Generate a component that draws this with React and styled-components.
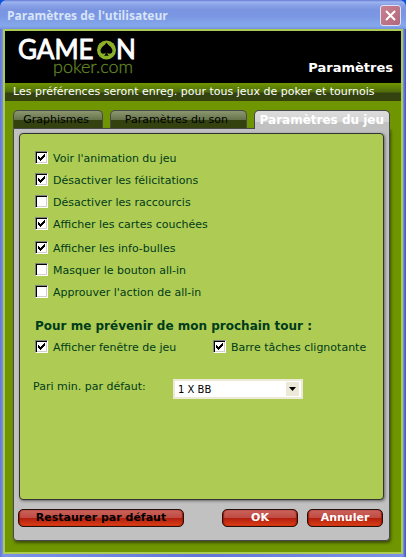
import styled, { createGlobalStyle } from "styled-components";

const GlobalStyle = createGlobalStyle`
  * {
    box-sizing: border-box;
  }

  body {
    margin: 0;
    background: #0a53e0;
    font-family: "DejaVu Sans", sans-serif;
    font-size: 11px;
  }
`;

const Window = styled.div`
  display: flex;
  flex-direction: column;
  min-height: 100vh;
  padding: 0 3px 3px;
  border-radius: 7px 7px 0 0;
  background: linear-gradient(to right, #6375d6, #7b92e8 3px, #6375d6 50%, #7b92e8 calc(100% - 3px), #3f4fbd);
`;

const TitleBar = styled.header`
  display: flex;
  align-items: center;
  justify-content: space-between;
  height: 29px;
  margin: 0 -3px;
  padding: 2px 5px 0 7px;
  border-radius: 7px 7px 0 0;
  background: linear-gradient(
    #6679d5,
    #9db5f0 2px,
    #8aa2e6 5px,
    #7a94e0 10px,
    #7b97e3 16px,
    #84a8ec 26px,
    #7590df
  );
`;

const Title = styled.h1`
  margin: 0;
  font-family: "Open Sans", sans-serif;
  font-size: 12px;
  font-weight: 700;
  line-height: 20px;
  color: #d8e4f8;
`;

const CloseButton = styled.button`
  display: grid;
  place-items: center;
  width: 21px;
  height: 21px;
  padding: 0;
  border: 1px solid #dfe0f4;
  border-radius: 3px;
  background: linear-gradient(135deg, #c9818f, #b2687c);
`;

const Content = styled.main`
  display: flex;
  flex: 1;
  flex-direction: column;
  border: 2px solid #accb53;
  background: #6f9500;
`;

const Banner = styled.div`
  display: flex;
  align-items: flex-end;
  justify-content: space-between;
  height: 52px;
  padding: 0 8px 6px 13px;
  background: #000;
`;

const Logo = styled.svg`
  width: 120px;
  height: 46px;
  overflow: visible;
  font-family: Lato, sans-serif;
`;

const BannerTitle = styled.h2`
  margin: 0;
  font-size: 13px;
  font-weight: 700;
  line-height: 18px;
  color: #fff;
`;

const Notice = styled.p`
  height: 18px;
  margin: 0;
  padding: 0 8px;
  line-height: 17px;
  white-space: nowrap;
  color: #fff;
  background: linear-gradient(#6f9500, #4e6b0c 9px, #33420f 10px, #33420f);
`;

const Body = styled.div`
  display: flex;
  flex: 1;
  flex-direction: column;
  padding: 9px 11px 11px 8px;
`;

const TabList = styled.div`
  display: grid;
  grid-template-columns: 90fr 136fr 136fr;
  gap: 7px;
`;

const Tab = styled.button`
  height: 18px;
  padding: 0 4px 0 0;
  border: 1px solid #48494a;
  border-bottom: 0;
  border-radius: 5px 5px 0 0;
  font-family: inherit;
  font-size: 11px;
  line-height: 17px;
  white-space: nowrap;
  color: #000;
  background: linear-gradient(#8c9770, #65734a 9px, #33420f 9px, #33420f);

  &[aria-selected="true"] {
    height: 19px;
    margin-bottom: -1px;
    padding: 0;
    z-index: 1;
    font-size: 12px;
    font-weight: 700;
    color: #fff;
    background: linear-gradient(#dcdcdc, #d4d4d4 11px, #c1c1c1 11px);
  }
`;

const Panel = styled.section`
  display: flex;
  flex: 1;
  flex-direction: column;
  padding: 4px 5px 13px;
  border: 1px solid #48494a;
  border-radius: 0 0 4px 4px;
  background: #c1c1c1;
  box-shadow: 1px 2px 3px #3b5000;
`;

const Options = styled.form`
  flex: 1;
  padding: 13px 13px 0;
  border: 1px solid #333;
  border-radius: 4px;
  color: #003c1b;
  background: #aecb53;
  box-shadow: 1px 1px 3px #666;
`;

const OptionGroup = styled.div`
  margin-bottom: 2px;
`;

const Option = styled.label`
  display: flex;
  align-items: flex-start;
  gap: 5px;
  height: 22px;
  padding-left: 2px;
  line-height: 24px;
  white-space: nowrap;
`;

const OptionRow = styled.div`
  display: grid;
  grid-template-columns: 178fr 159fr;
`;

const CheckBox = styled.input`
  appearance: none;
  flex: none;
  width: 13px;
  height: 13px;
  margin: 4px 0 0;
  border: 1px solid;
  border-color: #808080 #fff #fff #808080;
  background: #fff;
  box-shadow: inset 1px 1px #000, inset -1px -1px #d4d0c8;

  &:checked {
    background: #fff
      url("data:image/svg+xml,%3Csvg xmlns='http://www.w3.org/2000/svg' width='11' height='11' shape-rendering='crispEdges'%3E%3Cpath d='M2 4h1v1h1v1h1v-1h1v-1h1v-1h1v-1h1v3h-1v1h-1v1h-1v1h-1v1h-1v-1h-1v-1h-1z'/%3E%3C/svg%3E");
  }
`;

const GroupTitle = styled.h3`
  height: 22px;
  margin: 11px 0 0;
  padding-left: 2px;
  font-size: 12px;
  line-height: 24px;
  white-space: nowrap;
`;

const BetRow = styled.div`
  display: flex;
  align-items: flex-start;
  margin-top: 21px;
`;

const BetLabel = styled.label`
  width: 140px;
  line-height: 16px;
`;

const SelectBox = styled.div`
  display: flex;
  align-items: center;
  width: 130px;
  height: 20px;
  padding-right: 2px;
  border: 2px solid #ece9d8;
  background: #fff;
`;

const Select = styled.select`
  appearance: none;
  flex: 1;
  width: 0;
  height: 16px;
  padding: 0 3px;
  border: 0;
  font-family: inherit;
  font-size: 10px;
  color: #000;
  background: transparent;
`;

const SelectArrow = styled.svg`
  width: 13px;
  height: 14px;
  background: #ece9d8;
`;

const Actions = styled.footer`
  display: flex;
  gap: 9px;
  margin: 9px 0 0 -1px;
  padding-right: 1px;
`;

const ActionButton = styled.button`
  width: ${(props) => (props.$wide ? 166 : 76)}px;
  height: 18px;
  margin-right: ${(props) => (props.$wide ? "auto" : 0)};
  padding: 0;
  border: 1px solid #24120a;
  border-radius: 5px;
  font-family: inherit;
  font-size: 11px;
  font-weight: 700;
  line-height: 16px;
  white-space: nowrap;
  color: ${(props) => (props.$wide ? "#000" : "#fff")};
  background: linear-gradient(#c9645e, #c04a41 8px, #b11d0e 8px, #dc4016);
  box-shadow: inset 1px 0 1px #a51507, inset -1px 0 1px #a51507;
`;

const gameOptions = [
  [
    { label: "Voir l'animation du jeu", checked: true },
    { label: "Désactiver les félicitations", checked: true },
    { label: "Désactiver les raccourcis", checked: false },
    { label: "Afficher les cartes couchées", checked: true },
  ],
  [
    { label: "Afficher les info-bulles", checked: true },
    { label: "Masquer le bouton all-in", checked: false },
    { label: "Approuver l'action de all-in", checked: false },
  ],
];

const turnOptions = [
  { label: "Afficher fenêtre de jeu", checked: true },
  { label: "Barre tâches clignotante", checked: true },
];

function CheckOption({ label, checked }) {
  return (
    <Option>
      <CheckBox type="checkbox" defaultChecked={checked} />
      {label}
    </Option>
  );
}

function GameOnLogo() {
  return (
    <Logo viewBox="0 0 120 46" role="img" aria-label="GameOn poker.com">
      <g fontSize="26" fill="#fff" stroke="#fff" strokeWidth="0.9">
        <text x="0" y="28">
          GAME
        </text>
        <text x="98" y="28">
          N
        </text>
      </g>
      <circle cx="88.5" cy="19" r="9.5" fill="#8cb128" />
      <path
        d="M88.5 11.500c1.400 2.700 6 4.800 6 8.300 0 2.900-3.400 3.900-5.100 1.900.1 1.500.6 2.400 1.600 3.100h-5c1-.7 1.500-1.600 1.600-3.100-1.700 2-5.100 1-5.100-1.900 0-3.500 4.600-5.600 6-8.300z"
        fill="#000"
      />
      <text x="35" y="42" fontSize="18" fontWeight="300" fill="#628424" stroke="#628424" strokeWidth="0.3">
        poker.com
      </text>
    </Logo>
  );
}

export default function App() {
  return (
    <>
      <GlobalStyle />
      <Window>
        <TitleBar>
          <Title>Paramètres de l'utilisateur</Title>
          <CloseButton type="button" aria-label="Fermer">
            <svg width="11" height="11" viewBox="0 0 11 11">
              <path d="M1 1l9 9M10 1l-9 9" stroke="#fff" strokeWidth="2" />
            </svg>
          </CloseButton>
        </TitleBar>
        <Content>
          <Banner>
            <GameOnLogo />
            <BannerTitle>Paramètres</BannerTitle>
          </Banner>
          <Notice>Les préférences seront enreg. pour tous jeux de poker et tournois</Notice>
          <Body>
            <TabList role="tablist">
              <Tab type="button" role="tab" aria-selected="false">
                Graphismes
              </Tab>
              <Tab type="button" role="tab" aria-selected="false">
                Paramètres du son
              </Tab>
              <Tab type="button" role="tab" aria-selected="true">
                Paramètres du jeu
              </Tab>
            </TabList>
            <Panel>
              <Options>
                {gameOptions.map((group, index) => (
                  <OptionGroup key={index}>
                    {group.map((option) => (
                      <CheckOption key={option.label} {...option} />
                    ))}
                  </OptionGroup>
                ))}
                <GroupTitle>Pour me prévenir de mon prochain tour :</GroupTitle>
                <OptionRow>
                  {turnOptions.map((option) => (
                    <CheckOption key={option.label} {...option} />
                  ))}
                </OptionRow>
                <BetRow>
                  <BetLabel htmlFor="min-bet">Pari min. par défaut:</BetLabel>
                  <SelectBox>
                    <Select id="min-bet" defaultValue="1">
                      <option value="1">1 X BB</option>
                      <option value="2">2 X BB</option>
                    </Select>
                    <SelectArrow viewBox="0 0 13 14" aria-hidden="true">
                      <path d="M3 5h7L6.500 9z" fill="#000" />
                    </SelectArrow>
                  </SelectBox>
                </BetRow>
              </Options>
              <Actions>
                <ActionButton type="button" $wide>
                  Restaurer par défaut
                </ActionButton>
                <ActionButton type="button">OK</ActionButton>
                <ActionButton type="button">Annuler</ActionButton>
              </Actions>
            </Panel>
          </Body>
        </Content>
      </Window>
    </>
  );
}
